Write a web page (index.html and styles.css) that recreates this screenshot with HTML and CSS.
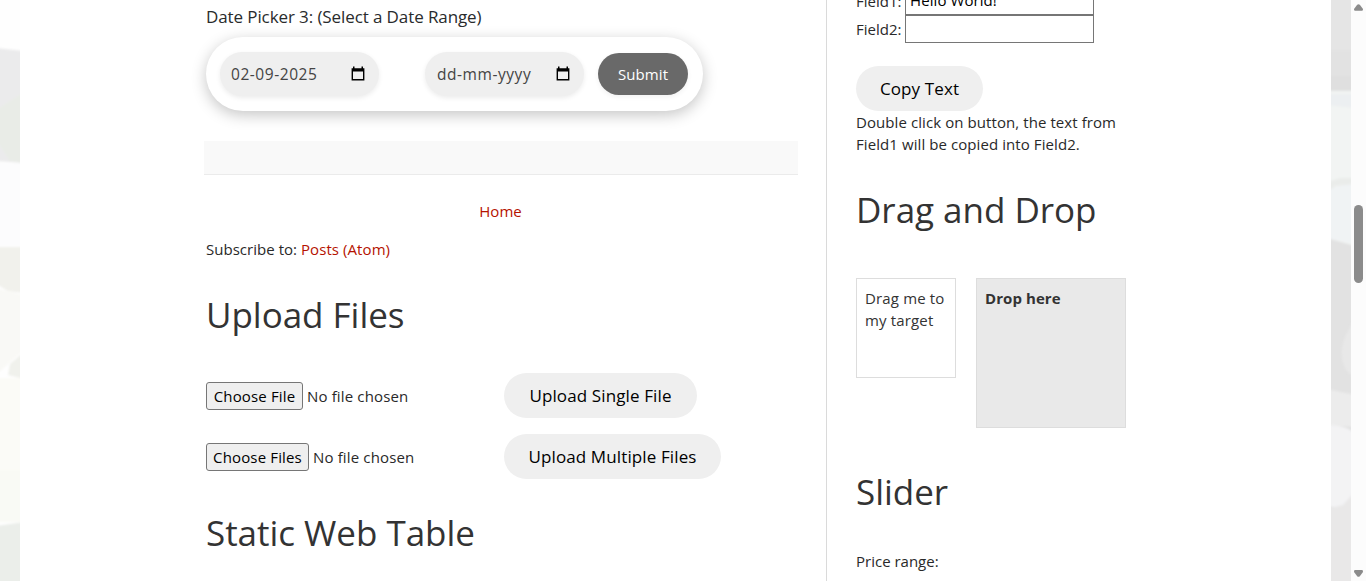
FILE: index.html
```html
<!DOCTYPE html>
<html lang="en">
<head>
<meta charset="utf-8">
<title>Automation Practice</title>
<link rel="stylesheet" href="styles.css">
</head>
<body>
<div class="page">
  <div class="edge edge-left"><svg width="20" height="581" viewBox="0 0 20 581">
    <defs><filter id="soft"><feGaussianBlur stdDeviation="1.2"/></filter></defs>
    <rect width="20" height="581" fill="#fefefe"/>
    <g filter="url(#soft)">
      <path d="M-4 48L24 51V163L-4 161Z" fill="#ebebec"/>
      <path d="M-4 110L24 92V163L10 161L-4 140Z" fill="#e9ece7"/>
      <path d="M-4 163H24V246H-4Z" fill="#fcfcfd"/>
      <path d="M-4 247H24V293L8 291L-4 284Z" fill="#f1f1ec"/>
      <path d="M-4 288L24 295V350L-4 375Z" fill="#f9f9f6"/>
      <path d="M24 352L10 364L8 375L24 379Z" fill="#f0f1ec"/>
      <path d="M-4 378H24V470H-4Z" fill="#fbfbf7"/>
      <path d="M-4 470H24V522H-4Z" fill="#f9faf5"/>
      <path d="M-4 526L24 522V590H-4Z" fill="#ebeeea"/>
    </g>
  </svg></div>
  <div class="content">
    <main class="main">
      <p class="caption"><span>Date Picker 3: (Select a Date Range)</span></p>
      <div class="range">
        <div class="date"><span>02-09-2025</span><svg class="cal" width="14" height="15" viewBox="0 0 14 15"><path d="M.6 2.2H2V.6h1.5v1.6h7V.6H12v1.6h1.4v12.2H.6ZM2 5.5V13h10V5.5Z" fill="#000" fill-rule="evenodd"/></svg></div>
        <div class="date second"><span>dd-mm-yyyy</span><svg class="cal" width="14" height="15" viewBox="0 0 14 15"><path d="M.6 2.2H2V.6h1.5v1.6h7V.6H12v1.6h1.4v12.2H.6ZM2 5.5V13h10V5.5Z" fill="#000" fill-rule="evenodd"/></svg></div>
        <button class="submit"><span>Submit</span></button>
      </div>
      <div class="footer-bar"></div>
      <p class="home"><a>Home</a></p>
      <p class="subscribe"><span>Subscribe to: </span><a>Posts (Atom)</a></p>
      <h2 class="h-upload"><span>Upload Files</span></h2>
      <div class="uploads">
        <div class="file-row"><div class="picker"><button class="choose one"><span>Choose File</span></button><span class="none">No file chosen</span></div><button class="pill single"><span>Upload Single File</span></button></div>
        <div class="file-row"><div class="picker"><button class="choose many"><span>Choose Files</span></button><span class="none">No file chosen</span></div><button class="pill multi"><span>Upload Multiple Files</span></button></div>
      </div>
      <h2 class="h-table"><span>Static Web Table</span></h2>
    </main>
    <aside class="side">
      <div class="field first"><label>Field1:</label><div class="box"><span>Hello World!</span></div></div>
      <div class="field"><label>Field2:</label><div class="box"></div></div>
      <button class="pill copy"><span>Copy Text</span></button>
      <p class="hint"><span>Double click on button, the text from</span><br><span>Field1 will be copied into Field2.</span></p>
      <h2 class="h-drag"><span>Drag and Drop</span></h2>
      <div class="dnd">
        <div class="drag"><span>Drag me to</span><br><span>my target</span></div>
        <div class="drop"><span>Drop here</span></div>
      </div>
      <h2 class="h-slider"><span>Slider</span></h2>
      <p class="price"><span>Price range:</span></p>
    </aside>
  </div>
  <div class="edge edge-right"><svg width="20" height="581" viewBox="0 0 20 581">
    <rect width="20" height="581" fill="#e2e2e2"/>
    <g filter="url(#soft)">
      <path d="M-4 -4H24V50H-4Z" fill="#e5e5e5"/>
      <path d="M-4 76H24V90H-4Z" fill="#dfdfdf"/>
      <path d="M-4 91H24V246L-4 238Z" fill="#f2f4f3"/>
      <path d="M-4 94H24V108L-4 105Z" fill="#eceff1"/>
      <path d="M-4 182L10 178H24V184L4 186L-4 195Z" fill="#eaecea"/>
      <path d="M-4 190L10 186L24 184V244L-4 238Z" fill="#f0f3f4"/>
      <path d="M24 320Q2 350 16 371L24 378Z" fill="#e8e8e8"/>
      <path d="M-4 389L24 395V427L-4 425Z" fill="#ececec"/>
      <path d="M-4 425Q16 425 24 434V500Q10 510 -4 506Z" fill="#f3f3f4"/>
      <path d="M-4 509L12 505L24 492V590H-4Z" fill="#e9e8e8"/>
    </g>
  </svg></div>
  <div class="scroll">
    <svg width="15" height="581" viewBox="0 0 15 581" fill="#8b8b8b"><path d="M6.2 4.8Q7.5 3.6 8.8 4.8L12 9Q12.2 10.7 11 10.7H4Q2.8 10.7 3 9Z"/><rect x="3" y="205" width="9" height="78" rx="4.5"/><path d="M6.2 576.2Q7.5 577.4 8.8 576.2L12 572Q12.2 570 11 570H4Q2.8 570 3 572Z"/></svg>
  </div>
</div>
</body>
</html>
```
FILE: styles.css
```css
* { box-sizing: border-box; }
body { margin: 0; background: #fff; font: 15px/22px "Open Sans", "Noto Sans", sans-serif; letter-spacing: .08px; color: #292929; overflow: hidden; }
p, h2 { margin: 0; white-space: nowrap; }
button { font: inherit; letter-spacing: inherit; border: 0; padding: 0; margin: 0; white-space: nowrap; }
svg { display: block; }
a { color: #b51200; }
.page { display: flex; height: 581px; overflow: hidden; }
.edge { width: 20px; flex: none; overflow: hidden; }
.content { width: 1311px; flex: none; display: flex; }
.scroll { width: 15px; background: #fcfcfc; }
.main { width: 807px; flex: none; padding-left: 186px; border-right: 1px solid #dadada; }
.side { padding-left: 29px; width: 504px; }
h2 { font-weight: 400; font-size: 35px; line-height: 50px; letter-spacing: -.03px; color: #333; }
.caption { font-size: 17px; letter-spacing: -.1px; line-height: 24px; padding-top: 5px; height: 37px; color: #292b2c; }
.range { width: 497px; height: 74px; border-radius: 37px; background: #fff; box-shadow: 0 4px 15px rgba(0,0,0,.23); display: flex; align-items: center; padding: 0 15px; }
.date { width: 159px; height: 44px; border-radius: 22px; background: #efefef; box-shadow: 0 2px 5px rgba(0,0,0,.08); display: flex; align-items: center; justify-content: space-between; padding: 0 14px 0 11px; color: #444; }
.date:first-child { margin-left: -1px; }
.date.second { margin-left: 46px; padding-left: 12px; }
.date span { font-size: 15.5px; letter-spacing: .55px; }
.cal { margin-top: -1px; }
.submit { width: 90px; height: 42px; border-radius: 21px; background: #696969; color: #fff; font-weight: 500; letter-spacing: .1px; margin-left: 14px; box-shadow: 0 2px 5px rgba(0,0,0,.06); }
.footer-bar { width: 594px; height: 34px; margin: 30px 0 0 -2px; background: #f9f9f9; border-bottom: 1px solid #ebebeb; }
.home { width: 589px; text-align: center; margin-top: 25px; }
.subscribe { margin-top: 16px; }
.subscribe span { white-space: pre; letter-spacing: .03px; }
.h-upload { margin-top: 30px; }
.uploads { margin-top: 33px; display: grid; gap: 16px; }
.file-row { height: 45px; display: flex; align-items: center; }
.picker { width: 298px; display: flex; align-items: center; gap: 4px; }
.choose { height: 28px; border: 1px solid #767676; border-radius: 3px; background: #efefef; color: #000; letter-spacing: .15px; }
.none { letter-spacing: .15px; }
.one { width: 97px; }
.many { width: 103px; }
.pill { height: 45px; border-radius: 23px; background: #efefef; color: #000; font-size: 17px; letter-spacing: .12px; display: block; }
.single { width: 193px; }
.multi { width: 217px; }
.h-table { margin-top: 29px; }
.field { display: flex; height: 28px; align-items: center; }
.field label { width: 49px; letter-spacing: 0; }
.field.first { margin-top: -13px; }
.box { width: 189px; height: 28px; border: 1px solid #767676; color: #000; padding: 0 4px; line-height: 24px; }
.copy { width: 127px; margin-top: 23px; }
.h-drag { margin-top: 30px; }
.dnd { margin-top: 43px; display: flex; gap: 20px; align-items: flex-start; height: 150px; }
.drag { width: 100px; height: 100px; border: 1px solid #ddd; padding: 8px; color: #333; letter-spacing: .15px; }
.drop { width: 150px; height: 150px; border: 1px solid #ddd; background: #e9e9e9; padding: 8px; font-weight: 700; color: #333; }
.h-slider { margin-top: 39px; }
.price { margin-top: 33px; letter-spacing: 0; }
```
